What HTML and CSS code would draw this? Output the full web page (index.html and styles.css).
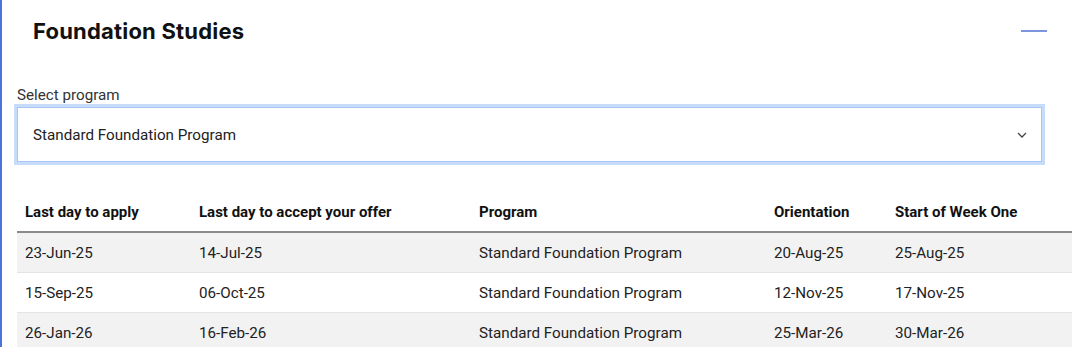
FILE: index.html
```html
<!DOCTYPE html>
<html lang="en">
<head>
<meta charset="utf-8">
<title>Foundation Studies</title>
<link rel="stylesheet" href="styles.css">
</head>
<body>
<section class="panel">
  <header class="panel-head">
    <h2 class="panel-title">Foundation Studies</h2>
    <span class="collapse-icon" aria-label="Collapse"></span>
  </header>
  <div class="field">
    <label class="field-label">Select program</label>
    <div class="select">
      <span class="select-value">Standard Foundation Program</span>
      <svg class="chevron" width="10" height="6" viewBox="0 0 10 6"><path d="M1 1 L5 5 L9 1" fill="none" stroke="#444" stroke-width="1.3"/></svg>
    </div>
  </div>
  <table class="dates">
    <thead>
      <tr><th class="c1">Last day to apply</th><th class="c2">Last day to accept your offer</th><th class="c3">Program</th><th class="c4">Orientation</th><th class="c5">Start of Week One</th></tr>
    </thead>
    <tbody>
      <tr><td>23-Jun-25</td><td>14-Jul-25</td><td>Standard Foundation Program</td><td>20-Aug-25</td><td>25-Aug-25</td></tr>
      <tr><td>15-Sep-25</td><td>06-Oct-25</td><td>Standard Foundation Program</td><td>12-Nov-25</td><td>17-Nov-25</td></tr>
      <tr><td>26-Jan-26</td><td>16-Feb-26</td><td>Standard Foundation Program</td><td>25-Mar-26</td><td>30-Mar-26</td></tr>
    </tbody>
  </table>
</section>
</body>
</html>
```
FILE: styles.css
```css
html, body {
  margin: 0;
  padding: 0;
  background: #fff;
}
body {
  font-family: Roboto, "Liberation Sans", sans-serif;
  color: #222;
  overflow: hidden;
}
.panel {
  border-left: 2px solid #4d72d9;
  padding: 0 8px 0 15px;
  height: 347px;
  box-sizing: border-box;
}
.panel-head {
  display: flex;
  align-items: center;
  justify-content: space-between;
  height: 61px;
  padding: 0 25px 0 16px;
}
.panel-title {
  margin: 0;
  font-family: Inter, "Open Sans", sans-serif;
  font-weight: 700;
  font-size: 22px;
  color: #111;
  letter-spacing: 0.2px;
}
.collapse-icon {
  display: block;
  width: 26px;
  height: 2px;
  background: #7d95dc;
}
.field {
  margin-top: 26px;
}
.field-label {
  display: block;
  font-size: 15.2px;
  color: #333;
  line-height: 17px;
}
.select {
  margin-top: 3px;
  margin-right: 30px;
  display: flex;
  align-items: center;
  justify-content: space-between;
  height: 53px;
  border: 1px solid #a9c5f5;
  box-shadow: 0 0 0 3px #c7dbfb;
  padding: 0 14px 0 15px;
}
.select-value {
  font-size: 15.2px;
  color: #222;
}
.chevron {
  display: block;
}
.dates {
  margin-top: 31px;
  width: 1055px;
  border-collapse: collapse;
  font-size: 15.2px;
}
.dates th {
  text-align: left;
  font-weight: 700;
  font-size: 15px;
  color: #111;
  padding: 0 8px;
  height: 38px;
  border-bottom: 2px solid #8a8a8a;
}
.dates td {
  padding: 0 8px;
  height: 39px;
  color: #222;
  border-bottom: 1px solid #e4e4e4;
}
.dates tbody tr:nth-child(odd) {
  background: #f2f2f2;
}
.c1 { width: 158px; }
.c2 { width: 264px; }
.c3 { width: 279px; }
.c4 { width: 105px; }
```
